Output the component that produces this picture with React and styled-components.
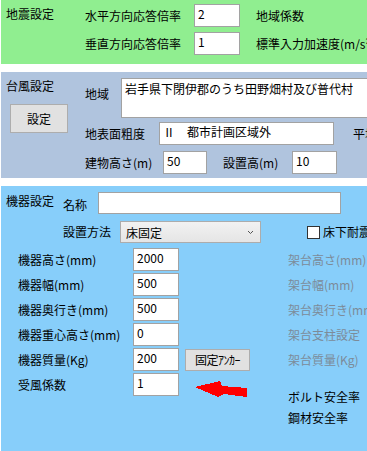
import React from 'react';
import styled, { createGlobalStyle } from 'styled-components';

const Global = createGlobalStyle`
  html, body { margin: 0; padding: 0; overflow: hidden; background: #fff; }
  body {
    font-family: "Noto Sans CJK JP", "Noto Sans", sans-serif;
    font-size: 12px;
    color: #000;
  }
  #root { width: 367px; height: 451px; overflow: hidden; }
`;

const Page = styled.div`
  width: 700px;
  display: flex;
  flex-direction: column;
  gap: 8px;
  padding-left: 1px;
`;

const Panel = styled.section`
  background: ${p => p.$bg};
  height: ${p => p.$h}px;
  padding: ${p => p.$pad};
  box-sizing: border-box;
  display: flex;
  flex-direction: ${p => p.$dir || 'row'};
`;

const Side = styled.div`
  width: ${p => p.$w}px;
  flex: none;
  display: flex;
  flex-direction: column;
  align-items: flex-start;
`;

const Title = styled.div`
  line-height: 16px;
  margin-top: ${p => p.$mt || 0}px;
  white-space: nowrap;
`;

const Main = styled.div`
  display: flex;
  flex-direction: column;
  gap: ${p => p.$gap || 0}px;
`;

const Row = styled.div`
  display: flex;
  align-items: ${p => p.$align || 'center'};
  margin-top: ${p => p.$mt || 0}px;
  padding-left: ${p => p.$pl || 0}px;
`;

const Label = styled.div`
  width: ${p => (p.$w ? `${p.$w}px` : 'auto')};
  flex: none;
  margin-left: ${p => p.$ml || 0}px;
  margin-top: ${p => p.$mt || 0}px;
  line-height: 16px;
  white-space: nowrap;
  color: ${p => (p.$muted ? '#7c8b99' : '#000')};
`;

const Field = styled.input`
  width: ${p => p.$w}px;
  height: ${p => p.$h || 23}px;
  flex: none;
  box-sizing: border-box;
  border: 1px solid #a2a2a2;
  background: #fff;
  margin: 0;
  padding: 0 3px 5px;
  font: inherit;
  font-size: 12px;
  color: #000;
  outline: none;
`;

const Area = styled.textarea`
  width: 400px;
  height: 40px;
  flex: none;
  box-sizing: border-box;
  border: 1px solid #a2a2a2;
  background: #fff;
  margin: 0;
  padding: 2px 3px 0;
  font: inherit;
  font-size: 12px;
  line-height: 16px;
  resize: none;
  outline: none;
  overflow: hidden;
`;

const Button = styled.div`
  width: ${p => p.$w}px;
  height: ${p => p.$h}px;
  margin-top: ${p => p.$mt || 0}px;
  margin-left: ${p => p.$ml || 0}px;
  box-sizing: border-box;
  border: 1px solid #adadad;
  background: #e1e1e1;
  display: flex;
  align-items: center;
  justify-content: center;
  white-space: nowrap;
  letter-spacing: ${p => p.$ls || 0}px;
`;

const Select = styled.div`
  width: 141px;
  height: 22px;
  flex: none;
  box-sizing: border-box;
  border: 1px solid #acacac;
  background: linear-gradient(#f2f2f2, #e5e5e5);
  display: flex;
  align-items: center;
  justify-content: space-between;
  padding: 0 6px 0 5px;
`;

const Check = styled.span`
  width: 13px;
  height: 13px;
  box-sizing: border-box;
  border: 1px solid #333;
  background: #fff;
  flex: none;
  margin-left: 46px;
  margin-right: 3px;
`;

const Grid = styled.div`
  display: grid;
  grid-template-columns: 115px 46px 109px 200px;
  grid-template-rows: repeat(6, 23px);
  row-gap: 2px;
  margin-top: 5px;
  padding-left: 12px;
  align-items: center;
`;

const Cell = styled.div`
  grid-column: ${p => p.$c};
  grid-row: ${p => p.$r};
  align-self: ${p => p.$self || 'center'};
  display: flex;
  flex-direction: column;
  gap: ${p => p.$gap || 0}px;
  padding-top: ${p => p.$pt || 0}px;
  padding-left: ${p => p.$plx || 0}px;
`;

const Stacked = styled.div`
  line-height: 18px;
  white-space: nowrap;
`;

const Arrow = () => (
  <svg width="54" height="18" viewBox="0 0 54 18" shapeRendering="crispEdges">
    <polygon points="0,6 25,0 27,5 52,7 52,16 29,13 23,16" fill="#ff0000" />
  </svg>
);

const Chevron = () => (
  <svg width="7" height="5" viewBox="0 0 7 5">
    <polyline points="1,1 3.5,3.5 6,1" fill="none" stroke="#555" strokeWidth="1" />
  </svg>
);

const leftRows = [
  ['機器高さ(mm)', '2000', '架台高さ(mm)'],
  ['機器幅(mm)', '500', '架台幅(mm)'],
  ['機器奥行き(mm)', '500', '架台奥行き(mm)'],
  ['機器重心高さ(mm)', '0', '架台支柱設定'],
  ['機器質量(Kg)', '200', '架台質量(Kg)'],
  ['受風係数', '1', null],
];

export default function App() {
  return (
    <>
      <Global />
      <Page>
        <Panel $bg="#90ee90" $h={64} $pad="4px 0 0 5px">
          <Side $w={79}>
            <Title $mt={2}>地震設定</Title>
          </Side>
          <Main $gap={5}>
            <Row>
              <Label $w={109}>水平方向応答倍率</Label>
              <Field $w={46} readOnly defaultValue="2" />
              <Label $ml={16}>地域係数</Label>
            </Row>
            <Row>
              <Label $w={109}>垂直方向応答倍率</Label>
              <Field $w={46} readOnly defaultValue="1" />
              <Label $ml={16}>標準入力加速度(m/s²)</Label>
            </Row>
          </Main>
        </Panel>

        <Panel $bg="#b0c4de" $h={106} $pad="6px 0 0 5px">
          <Side $w={79}>
            <Title>台風設定</Title>
            <Button $w={58} $h={29} $mt={10} $ml={4}>設定</Button>
          </Side>
          <Main>
            <Row $align="flex-start">
              <Label $w={36} $mt={8}>地域</Label>
              <Area readOnly defaultValue="岩手県下閉伊郡のうち田野畑村及び普代村" />
            </Row>
            <Row $mt={4}>
              <Label $w={74}>地表面粗度</Label>
              <Field $w={175} readOnly defaultValue="Ⅱ　都市計画区域外" />
              <Label $ml={19}>平均風速(m/s)</Label>
            </Row>
            <Row $mt={6}>
              <Label $w={78}>建物高さ(m)</Label>
              <Field $w={44} readOnly defaultValue="50" />
              <Label $w={69} $ml={16}>設置高(m)</Label>
              <Field $w={45} readOnly defaultValue="10" />
            </Row>
          </Main>
        </Panel>

        <Panel $bg="#87cefa" $h={300} $pad="6px 0 0 5px" $dir="column">
          <Row>
            <Label $w={57} $mt={-4}>機器設定</Label>
            <Label $w={35} $mt={4}>名称</Label>
            <Field $w={243} $h={22} readOnly defaultValue="" />
          </Row>
          <Row $mt={7} $pl={57}>
            <Label $w={57}>設置方法</Label>
            <Select>
              <span>床固定</span>
              <Chevron />
            </Select>
            <Check />
            <Label>床下耐震</Label>
          </Row>
          <Grid>
            {leftRows.map(([label, value, right], i) => (
              <React.Fragment key={label}>
                <Cell $c={1} $r={i + 1}><Label>{label}</Label></Cell>
                <Cell $c={2} $r={i + 1} $self="stretch">
                  <Field $w={46} readOnly defaultValue={value} />
                </Cell>
                {right && (
                  <Cell $c={4} $r={i + 1}><Label $muted>{right}</Label></Cell>
                )}
              </React.Fragment>
            ))}
            <Cell $c={3} $r={5}>
              <Button $w={65} $h={22} $ml={6} $ls={-0.5}>固定ｱﾝｶｰ</Button>
            </Cell>
            <Cell $c={3} $r={6} $self="start" $pt={8} $plx={16}>
              <Arrow />
            </Cell>
            <Cell $c={4} $r={6} $self="start" $pt={15} $gap={3}>
              <Stacked>ボルト安全率</Stacked>
              <Stacked>鋼材安全率</Stacked>
            </Cell>
          </Grid>
        </Panel>
      </Page>
    </>
  );
}
